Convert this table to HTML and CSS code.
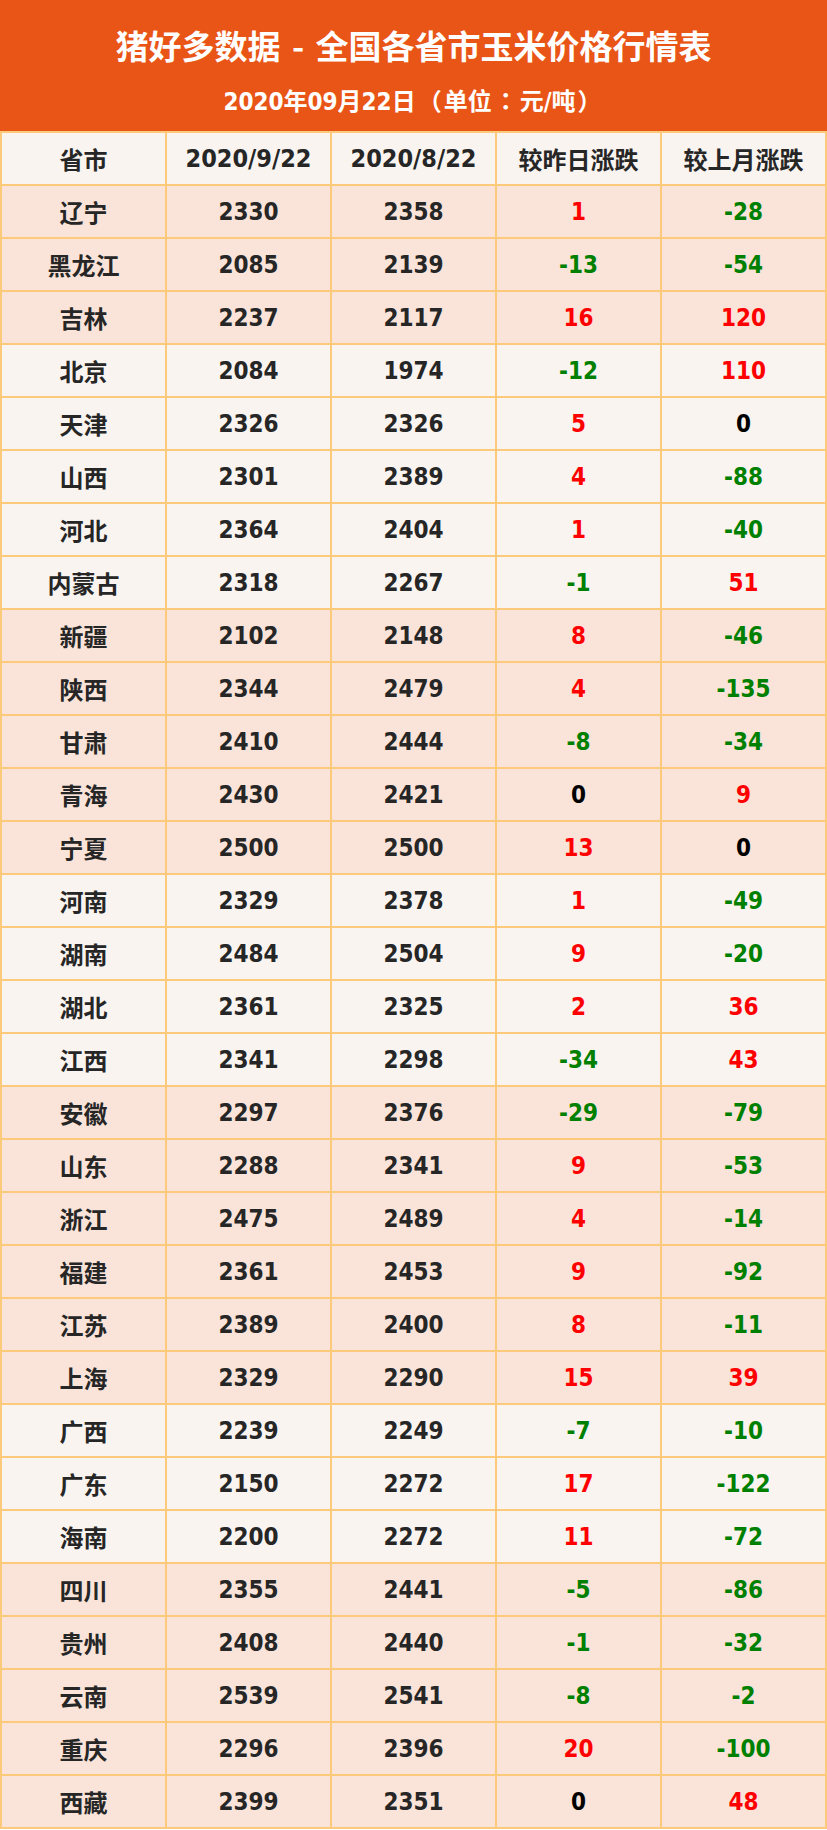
FILE: index.html
```html
<!DOCTYPE html>
<html lang="zh-CN">
<head>
<meta charset="utf-8">
<title>猪好多数据 - 全国各省市玉米价格行情表</title>
<link rel="stylesheet" href="styles.css">
</head>
<body>
<div class="page">
  <header class="banner">
    <h1 class="title">猪好多数据 - 全国各省市玉米价格行情表</h1>
    <p class="subtitle">2020年09月22日<span class="punct" lang="zh-TW">（</span>单位<span class="punct" lang="zh-TW">：</span>元/吨<span class="punct" lang="zh-TW">）</span></p>
  </header>
  <table class="prices">
    <thead>
      <tr><th>省市</th><th class="num">2020/9/22</th><th class="num">2020/8/22</th><th>较昨日涨跌</th><th>较上月涨跌</th></tr>
    </thead>
    <tbody>
      <tr class="pink"><td class="name">辽宁</td><td>2330</td><td>2358</td><td class="up">1</td><td class="down">-28</td></tr>
      <tr class="pink"><td class="name">黑龙江</td><td>2085</td><td>2139</td><td class="down">-13</td><td class="down">-54</td></tr>
      <tr class="pink"><td class="name">吉林</td><td>2237</td><td>2117</td><td class="up">16</td><td class="up">120</td></tr>
      <tr class="light"><td class="name">北京</td><td>2084</td><td>1974</td><td class="down">-12</td><td class="up">110</td></tr>
      <tr class="light"><td class="name">天津</td><td>2326</td><td>2326</td><td class="up">5</td><td class="flat">0</td></tr>
      <tr class="light"><td class="name">山西</td><td>2301</td><td>2389</td><td class="up">4</td><td class="down">-88</td></tr>
      <tr class="light"><td class="name">河北</td><td>2364</td><td>2404</td><td class="up">1</td><td class="down">-40</td></tr>
      <tr class="light"><td class="name">内蒙古</td><td>2318</td><td>2267</td><td class="down">-1</td><td class="up">51</td></tr>
      <tr class="pink"><td class="name">新疆</td><td>2102</td><td>2148</td><td class="up">8</td><td class="down">-46</td></tr>
      <tr class="pink"><td class="name">陕西</td><td>2344</td><td>2479</td><td class="up">4</td><td class="down">-135</td></tr>
      <tr class="pink"><td class="name">甘肃</td><td>2410</td><td>2444</td><td class="down">-8</td><td class="down">-34</td></tr>
      <tr class="pink"><td class="name">青海</td><td>2430</td><td>2421</td><td class="flat">0</td><td class="up">9</td></tr>
      <tr class="pink"><td class="name">宁夏</td><td>2500</td><td>2500</td><td class="up">13</td><td class="flat">0</td></tr>
      <tr class="light"><td class="name">河南</td><td>2329</td><td>2378</td><td class="up">1</td><td class="down">-49</td></tr>
      <tr class="light"><td class="name">湖南</td><td>2484</td><td>2504</td><td class="up">9</td><td class="down">-20</td></tr>
      <tr class="light"><td class="name">湖北</td><td>2361</td><td>2325</td><td class="up">2</td><td class="up">36</td></tr>
      <tr class="light"><td class="name">江西</td><td>2341</td><td>2298</td><td class="down">-34</td><td class="up">43</td></tr>
      <tr class="pink"><td class="name">安徽</td><td>2297</td><td>2376</td><td class="down">-29</td><td class="down">-79</td></tr>
      <tr class="pink"><td class="name">山东</td><td>2288</td><td>2341</td><td class="up">9</td><td class="down">-53</td></tr>
      <tr class="pink"><td class="name">浙江</td><td>2475</td><td>2489</td><td class="up">4</td><td class="down">-14</td></tr>
      <tr class="pink"><td class="name">福建</td><td>2361</td><td>2453</td><td class="up">9</td><td class="down">-92</td></tr>
      <tr class="pink"><td class="name">江苏</td><td>2389</td><td>2400</td><td class="up">8</td><td class="down">-11</td></tr>
      <tr class="pink"><td class="name">上海</td><td>2329</td><td>2290</td><td class="up">15</td><td class="up">39</td></tr>
      <tr class="light"><td class="name">广西</td><td>2239</td><td>2249</td><td class="down">-7</td><td class="down">-10</td></tr>
      <tr class="light"><td class="name">广东</td><td>2150</td><td>2272</td><td class="up">17</td><td class="down">-122</td></tr>
      <tr class="light"><td class="name">海南</td><td>2200</td><td>2272</td><td class="up">11</td><td class="down">-72</td></tr>
      <tr class="pink"><td class="name">四川</td><td>2355</td><td>2441</td><td class="down">-5</td><td class="down">-86</td></tr>
      <tr class="pink"><td class="name">贵州</td><td>2408</td><td>2440</td><td class="down">-1</td><td class="down">-32</td></tr>
      <tr class="pink"><td class="name">云南</td><td>2539</td><td>2541</td><td class="down">-8</td><td class="down">-2</td></tr>
      <tr class="pink"><td class="name">重庆</td><td>2296</td><td>2396</td><td class="up">20</td><td class="down">-100</td></tr>
      <tr class="pink"><td class="name">西藏</td><td>2399</td><td>2351</td><td class="flat">0</td><td class="up">48</td></tr>
    </tbody>
  </table>
</div>
</body>
</html>
```

FILE: styles.css
```css
html, body {
  margin: 0;
  padding: 0;
  background: #ffffff;
}

.page {
  width: 827px;
  font-family: "Noto Sans CJK SC", "DejaVu Sans", sans-serif;
}

.banner {
  background: #e95516;
  color: #ffffff;
  height: 131px;
  box-sizing: border-box;
  padding-top: 22px;
  text-align: center;
}

.title {
  margin: 0;
  font-size: 33px;
  line-height: 46px;
  font-weight: 700;
  word-spacing: 4px;
}

.subtitle {
  margin: 16px 0 0;
  font-family: "DejaVu Sans Condensed", "DejaVu Sans", "Noto Sans CJK SC", sans-serif;
  font-stretch: semi-condensed;
  font-size: 24px;
  line-height: 32px;
  font-weight: 700;
  text-spacing-trim: space-all;
}

.subtitle .punct {
  font-family: "Noto Sans CJK TC", sans-serif;
  font-stretch: normal;
  padding: 0 2px;
}

.prices {
  width: 827px;
  border-collapse: collapse;
  table-layout: fixed;
}

.prices th,
.prices td {
  border: 2px solid #fdc97b;
  height: 51px;
  padding: 0;
  text-align: center;
  vertical-align: middle;
  color: #262626;
  font-weight: 700;
}

.prices th {
  background: #f9f4f0;
  font-size: 24px;
  font-family: "Noto Sans CJK SC", sans-serif;
}

.prices th.num {
  font-family: "DejaVu Sans Condensed", "DejaVu Sans", sans-serif;
  font-stretch: semi-condensed;
  font-size: 25px;
}

.prices td {
  font-family: "DejaVu Sans Condensed", "DejaVu Sans", "Noto Sans CJK SC", sans-serif;
  font-stretch: semi-condensed;
  font-size: 24px;
}

.prices td.name {
  font-family: "Noto Sans CJK SC", sans-serif;
  font-stretch: normal;
  font-size: 24px;
}

.pink td {
  background: #fae4d9;
}

.light td {
  background: #f9f4f0;
}

.prices td.up {
  color: #ff0000;
}

.prices td.down {
  color: #008000;
}

.prices td.flat {
  color: #000000;
}
```
